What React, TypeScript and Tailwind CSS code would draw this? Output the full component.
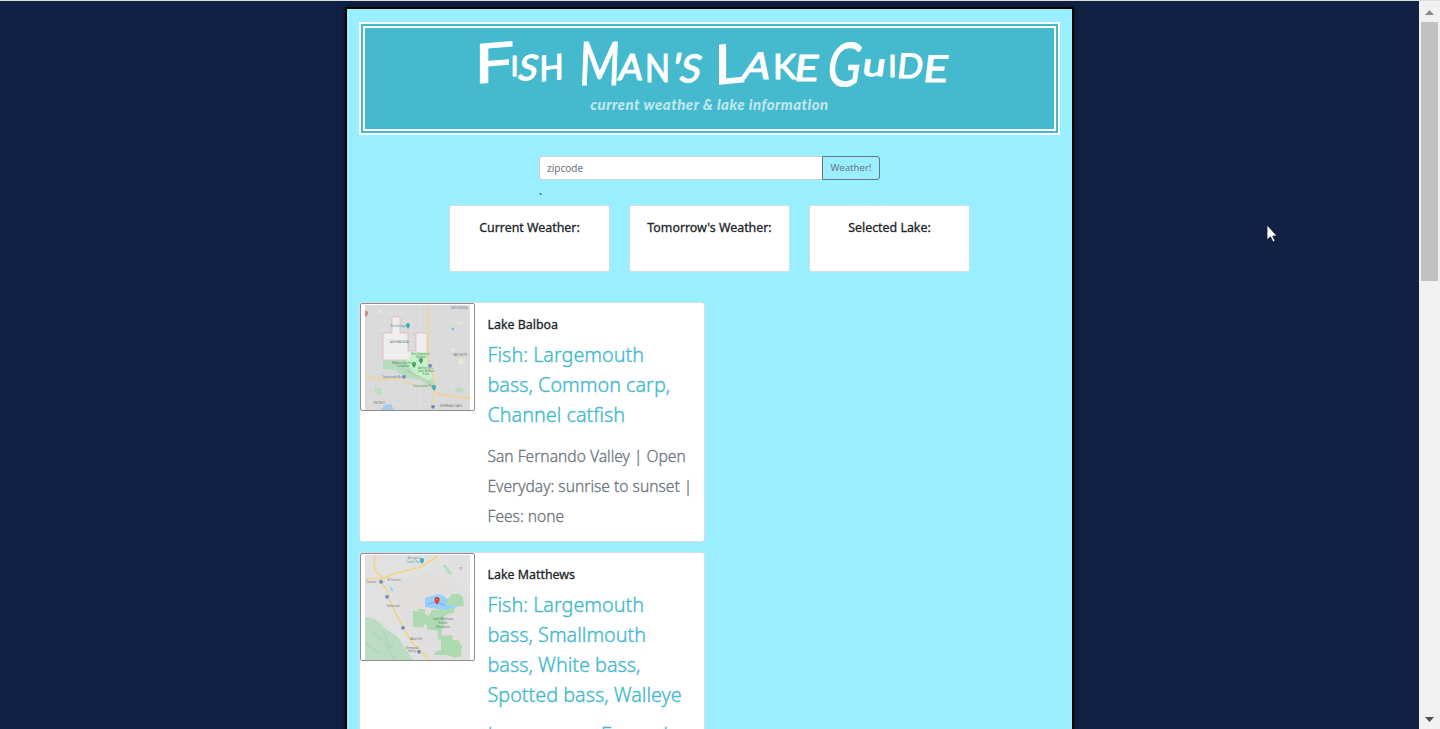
import React from "react";

type Glyph = [string, string];

const titleWords: { label: string; className: string; glyphs: Glyph[] }[] = [
  {
    label: "Fish",
    className: "mr-[18px]",
    glyphs: [
      ["F", "w-[32px] text-[54px] scale-x-[1.3] -skew-y-6"],
      ["I", "w-[9px] text-[27px] -translate-y-[6px]"],
      ["S", "w-[20px] text-[35px] -skew-x-12 -translate-y-[2px]"],
      ["H", "w-[25px] text-[35px] scale-x-[0.9] -skew-y-6 -translate-y-[2px]"],
    ],
  },
  {
    label: "Man's",
    className: "mr-[16px]",
    glyphs: [
      ["M", "w-[36px] text-[60px] scale-x-[0.74] translate-y-[3px] -skew-x-3"],
      ["A", "w-[26px] text-[36px] -skew-x-6 -translate-y-[2px]"],
      ["N", "w-[27px] text-[38px] scale-x-[0.86]"],
      ["'", "w-[11px] text-[40px] -skew-x-12"],
      ["S", "w-[19px] text-[38px] -skew-x-12"],
    ],
  },
  {
    label: "Lake",
    className: "mr-[12px]",
    glyphs: [
      ["L", "w-[25px] text-[54px] translate-y-[1px] -skew-y-6 scale-x-[1.1]"],
      ["A", "w-[31px] text-[37px] scale-x-[1.1] -skew-x-12 -translate-y-[3px]"],
      ["K", "w-[23px] text-[35px] -translate-y-[3px]"],
      ["E", "w-[22px] text-[36px] scale-x-[1.15] -skew-x-6 -translate-y-px"],
    ],
  },
  {
    label: "Guide",
    className: "",
    glyphs: [
      ["G", "w-[31px] text-[60px] scale-x-[0.76] translate-y-[4px] -skew-x-12"],
      ["u", "w-[27px] text-[32px] -translate-y-[6px] scale-x-[1.3] -skew-x-6"],
      ["I", "w-[9px] text-[30px] -translate-y-[5px]"],
      ["D", "w-[27px] text-[34px] -translate-y-[4px] -skew-x-6"],
      ["E", "w-[24px] text-[37px] scale-x-[1.15] -skew-x-6"],
    ],
  },
];

function MapLabels({ items }: { items: [number, number, string, string][] }) {
  return (
    <g fontSize="3" fontFamily="Noto Sans, sans-serif" textAnchor="middle">
      {items.map(([x, y, t, c]) => (
        <text key={t + x + y} x={x} y={y} fill={c}>{t}</text>
      ))}
    </g>
  );
}

function Pin({ x, y, color, s = 1 }: { x: number; y: number; color: string; s?: number }) {
  return (
    <g transform={`translate(${x} ${y}) scale(${s})`}>
      <path d="M0 3C-1 1-2 0-2-1a2 2 0 0 1 4 0C2 0 1 1 0 3Z" fill={color} />
      <circle cy="-1" r=".6" fill="#fff" opacity=".5" />
    </g>
  );
}

function Shield({ x, y }: { x: number; y: number }) {
  return <path transform={`translate(${x} ${y})`} d="M-2-2h4v2q0 2-2 2t-2-2z" fill="#6a86bd" stroke="#dde5f2" strokeWidth=".5" />;
}

function BalboaMap() {
  return (
    <svg width="105" height="105" viewBox="0 0 105 105">
      <rect width="105" height="105" fill="#dadadb" />
      <path d="M9 0V105M18 0V105M27 0V105M36 0V105M46 0V105M55 0V105M70 0V105M78 0V105M88 0V105M97 0V105M0 8H105M0 16H105M0 25H105M0 35H105M0 44H105M0 54H105M0 63H105M0 81H105M0 91H105M0 99H105" stroke="#e0e0e1" strokeWidth=".7" fill="none" />
      <g fill="#ebe5d3"><circle cx="94" cy="18" r="2" /><circle cx="88" cy="45" r="2" /><circle cx="96" cy="57" r="3" /><circle cx="15" cy="6" r="2" /></g>
      <path d="M27 12h8v16h8v18h8V28h11v27H18V28h9z" fill="#eeeeef" stroke="#e4a7a7" strokeWidth=".6" />
      <path d="M18 55h33l12 1 3 10 4 14-5 1-10-6-13-2-12-8-12-1z" fill="#b5dcbc" />
      <path d="M47 47l15 0 4 16 3 10-8 3-12-8-8-10z" fill="#c8f0ca" />
      <path d="M40 65l22 10 5 8" fill="none" stroke="#d29d9d" strokeWidth=".5" />
      <path d="M89 87l4-5 5 1v5zM9 82l8 1v8l-6-1z" fill="#bddfc1" />
      <path d="M16 105q2-6 10-6l3 6z" fill="#a2cbea" />
      <path d="M0 71q9 3 15 3t20-1q10 8 23 8h8l7 8q14 3 32 4" fill="none" stroke="#eed490" strokeWidth="1.4" />
      <path d="M63 0v54q0 7 3 12 4 8 4 18l-4 20" fill="none" stroke="#eed490" strokeWidth="1.4" />
      <MapLabels items={[[33,22,"Northridge","#499db0"],[34,38,"LAKE BALBOA","#727b81"],[55,50,"The Japanese","#478c61"],[56,53,"Garden","#478c61"],[37,59,"Balboa Sports","#478c61"],[38,62,"Complex","#478c61"],[61,64,"Anthony C.","#478c61"],[61,67,"Lake Balboa","#478c61"],[61,70,"Park","#478c61"],[29,73,"Sepulveda Basin","#5c83a0"],[59,82,"Sepulveda Dam","#499db0"],[94,4,"PANORAMA","#7692a2"],[95,51,"VAN NUYS","#777777"],[86,102,"SHERMAN OAKS","#777777"],[14,99,"ENCINO","#777777"]]} />
      <Pin x={43} y={21} color="#31a9ba" /><Pin x={49} y={60} color="#349d52" /><Pin x={56} y={56} color="#349d52" /><Pin x={69} y={83} color="#31a9ba" /><Pin x={1} y={9} color="#dd716c" />
      <circle cx="88" cy="24" r="1.2" fill="#63bddd" />
      <Shield x={65} y={61} /><Shield x={39} y={72} /><Shield x={68} y={102} />
    </svg>
  );
}

function MatthewsMap() {
  return (
    <svg width="105" height="105" viewBox="0 0 105 105">
      <rect width="105" height="105" fill="#e1e1e1" />
      <path d="M24 32l30-16 22 4 16 10 13 12v63H65L42 73 28 45z" fill="#e1dfdd" />
      <path d="M0 62q12 0 18 10l15 10 7 11 8 12H0z" fill="#bcdcc1" />
      <path d="M5 76l13 9 12 20M0 88l14 10M18 75l7 18M30 83l-4 10" stroke="#b0d3b6" strokeWidth="1.3" fill="none" />
      <path d="M77 10l4 0 7 9-4 1z" fill="#b6dfbf" />
      <path d="M80 45l5-3 2-3h7l4 3 1 9-9 1-1 6-7 1-3 3v11h-2v8l10-1 1 5h5l4 6-1 10-7 2-6-3H69l1-3 6-2V85l-3-1v-8l-11-2v-4l-3-1v3H48V56h5v-2h7v5l4 2 3-6 13-1z" fill="#aedab2" />
      <path d="M60 43l7-2 6-2 6 2 3 3 0 6 8 1 6-1-8 3-10 2-11-2-7-1z" fill="#9bcffb" />
      <path d="M63 49l7-2 10 3" stroke="#6baade" fill="none" />
      <path d="M25 32l3 4" stroke="#9bd0f0" strokeWidth="2" />
      <path d="M10 0q-2 13 1 17 7 3 7 13 7 8 6 14 8 18 15 29 5 13 14 20l11 12M0 24h17l11-5 28-7L74 0" fill="none" stroke="#f2d486" strokeWidth="1.7" />
      <MapLabels items={[[49,4,"Arlington","#6d919e"],[49,8,"Castle Park","#4ba8b8"],[6,28,"Corona","#707070"],[29,26,"El Cerrito","#707070"],[28,52,"Temescal","#707070"],[78,65,"Lake Mathews","#568773"],[78,69,"Estelle","#568773"],[78,73,"Mountain","#568773"],[51,85,"Alberhill","#707070"],[47,94,"Temescal","#707070"],[47,97,"Valley","#707070"],[96,15,"91","#777777"]]} />
      <Pin x={57} y={6} color="#31a9ba" /><Pin x={72} y={46} color="#dc3932" s={1.3} />
      <Shield x={16} y={27} /><Shield x={22} y={42} /><Shield x={38} y={73} /><Shield x={54} y={97} />
    </svg>
  );
}

function WeatherCard({ title }: { title: string }) {
  return (
    <section className="flex h-[67px] w-[161px] justify-center rounded-[3px] border border-[#d5dfe2] bg-white pt-[13px]">
      <h2 className="text-[12.4px] leading-[18px] font-normal whitespace-nowrap text-[#212529] [-webkit-text-stroke:0.3px]">{title}</h2>
    </section>
  );
}

function LakeCard({ name, map, fish, info, tone }: { name: string; map: React.ReactNode; fish: string[]; info: string[]; tone: string }) {
  return (
    <article className="flex min-h-[240px] w-[346px] items-start rounded-[3px] border border-[#d5dfe2] bg-white">
      <div className="flex h-[108px] w-[115px] shrink-0 justify-center rounded-[2px] border border-[#918c8e] bg-white pt-px">{map}</div>
      <div className="pt-[13px] pl-[12.5px]">
        <h2 className="text-[12.4px] leading-[18px] font-normal text-[#212529] [-webkit-text-stroke:0.3px]">{name}</h2>
        <div className="mt-[6px] text-[19.8px] leading-[30px] font-light text-[#45b9cd] [-webkit-text-stroke:0.35px]">
          {fish.map((l) => <p key={l} className="whitespace-nowrap">{l}</p>)}
        </div>
        <div className={`leading-[30px] font-light [-webkit-text-stroke:0.3px] ${tone}`}>
          {info.map((l) => <p key={l} className="whitespace-nowrap">{l}</p>)}
        </div>
      </div>
    </article>
  );
}

export default function App() {
  return (
    <div className="relative flex h-[729px] w-[1440px] overflow-hidden border-t border-[#dcdfe2] bg-[#112144] font-['Noto_Sans',sans-serif]">
      <div className="flex w-[1419px] justify-center pt-[6px]">
        <main className="h-[1100px] w-[729px] border-2 border-black bg-[#99eeff] px-[12px] pt-[13px] shadow-[0_0_6px_#07122c]">
          <header className="h-[113px] w-[701px] border-6 border-double border-white bg-[#45b9cd] text-white">
            <h1 className="flex h-[66px] items-baseline overflow-visible pl-[113px] font-['Lato',sans-serif]">
              {titleWords.map((word) => (
                <span key={word.label} className={`flex items-baseline ${word.className}`}>
                  {word.glyphs.map(([char, className], i) => (
                    <span key={i} className={`flex shrink-0 justify-center leading-[62px] font-normal [-webkit-text-stroke:1.2px] [stroke-linejoin:round] ${className}`}>{char}</span>
                  ))}
                </span>
              ))}
            </h1>
            <p className="text-center font-['Lato',sans-serif] text-[15px] leading-[20px] font-black tracking-[0.45px] text-[#bfe7ec] italic">current weather &amp; lake information</p>
          </header>
          <form className="mt-[21px] ml-[180px] flex h-[24px] w-[341px]">
            <input placeholder="zipcode" className="h-[24px] w-[283px] rounded-l-[3px] border border-r-0 border-[#ced4da] bg-white px-[7px] text-[10px] text-[#495057] placeholder:text-[#6c757d]" />
            <button type="button" className="h-[24px] w-[58px] rounded-r-[3px] border border-[#6c757d] pt-px text-[9.6px] text-[#6c757d]">Weather!</button>
          </form>
          <div className="ml-[180px] h-[25px] pt-[11px] text-[10px] leading-[15px] text-[#212529]">`</div>
          <div className="ml-[90px] flex gap-[19px]">
            <WeatherCard title="Current Weather:" />
            <WeatherCard title="Tomorrow's Weather:" />
            <WeatherCard title="Selected Lake:" />
          </div>
          <div className="mt-[30px] flex flex-col gap-[10px]">
            <LakeCard name="Lake Balboa" map={<BalboaMap />} fish={["Fish: Largemouth", "bass, Common carp,", "Channel catfish"]} info={["San Fernando Valley | Open", "Everyday: sunrise to sunset |", "Fees: none"]} tone="mt-[11px] text-[15.6px] text-[#6c757d]" />
            <LakeCard name="Lake Matthews" map={<MatthewsMap />} fish={["Fish: Largemouth", "bass, Smallmouth", "bass, White bass,", "Spotted bass, Walleye"]} info={["Lower area: Fenced"]} tone="mt-[9px] text-[20.5px] text-[#45b9cd]" />
          </div>
        </main>
      </div>
      <aside className="flex w-[21px] flex-col items-center justify-between bg-[#f1f1f1]">
        <div className="flex flex-col items-center">
          <svg width="17" height="21" viewBox="0 0 17 21"><path d="M4 14l4.5-5 4.5 5z" fill="#8c8c8c" /></svg>
          <div className="h-[259px] w-[17px] bg-[#c1c1c1]" />
        </div>
        <svg width="17" height="17" viewBox="0 0 17 17"><path d="M4 5l4.5 5L13 5z" fill="#505050" /></svg>
      </aside>
      <svg className="absolute top-[223px] left-[1266px]" width="13" height="20" viewBox="0 0 13 20"><path d="M1 1v15l3.5-3.2L7 18l2-1-2.3-5H11z" fill="#fff" stroke="#111827" strokeWidth=".8" /></svg>
    </div>
  );
}
